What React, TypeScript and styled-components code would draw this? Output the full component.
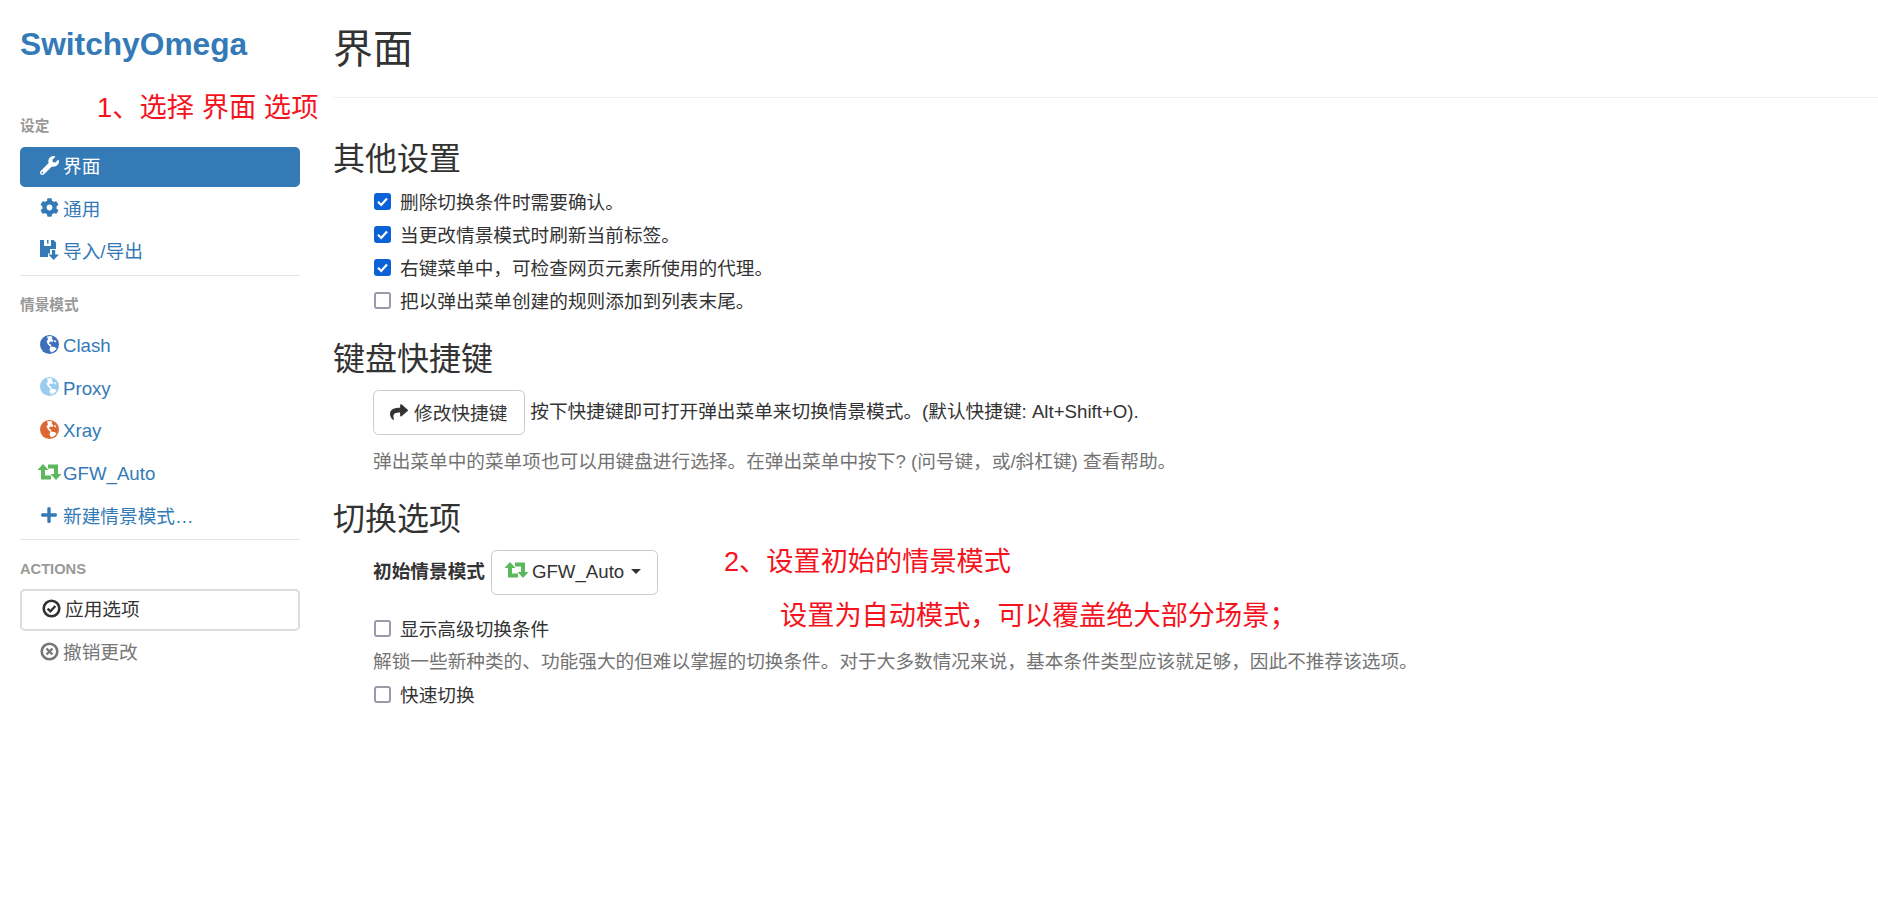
import styled, { createGlobalStyle } from 'styled-components'
import { FaCog, FaPlus, FaShare, FaWrench } from 'react-icons/fa'

const GlobalStyle = createGlobalStyle`
  html, body {
    margin: 0;
    background: #fff;
    color: #333;
    font-family: "Liberation Sans", "Noto Sans CJK SC", sans-serif;
    font-size: 18.67px;
  }
`

const Page = styled.div`
  position: relative;
  display: flex;
  width: 1878px;
  height: 924px;
  overflow: hidden;
`

const Sidebar = styled.aside`
  flex: none;
  width: 280px;
  margin: 0 33px 0 20px;
  padding-top: 22px;
`

const Logo = styled.div`
  height: 44px;
  font-size: 31.7px;
  font-weight: bold;
  line-height: 44px;
  color: #337ab7;
`

const NavHeader = styled.div<{ $top: number }>`
  margin-top: ${(p) => p.$top}px;
  height: 20px;
  margin-bottom: 11px;
  font-size: 14.67px;
  font-weight: bold;
  line-height: 20px;
  color: #999;
`

const NavList = styled.ul`
  list-style: none;
  margin: 0;
  padding: 0;
  display: flex;
  flex-direction: column;
  gap: 2.67px;
`

const NavItem = styled.li<{ $variant?: 'active' | 'action' | 'muted' }>`
  box-sizing: border-box;
  display: flex;
  align-items: center;
  height: ${(p) => (p.$variant === 'action' ? 42 : 40)}px;
  margin: ${(p) => (p.$variant === 'action' ? '-1px 0' : '0')};
  padding-left: 20px;
  border-radius: 5px;
  line-height: 26px;
  color: ${(p) =>
    p.$variant === 'active' ? '#fff' : p.$variant === 'action' ? '#333' : p.$variant === 'muted' ? '#777' : '#337ab7'};
  background: ${(p) => (p.$variant === 'active' ? '#337ab7' : 'transparent')};
  border: ${(p) => (p.$variant === 'action' ? '2px solid #dcdcdc' : 'none')};
`

const NavIcon = styled.span<{ $color?: string }>`
  flex: none;
  width: 23px;
  margin-bottom: 4px;
  display: flex;
  align-items: center;
  color: ${(p) => p.$color || 'inherit'};
  svg {
    display: block;
  }
`

const WideIcon = styled(NavIcon)`
  margin-left: -3px;
  width: 26px;
`

const Divider = styled.div`
  height: 1.33px;
  margin: 2.4px 0 0;
  background: #e5e5e5;
`

const Main = styled.main`
  flex: 1;
  min-width: 0;
`

const PageTitle = styled.h1`
  margin: 0;
  padding-top: 24px;
  height: 98px;
  box-sizing: border-box;
  border-bottom: 1.33px solid #eee;
  font-size: 40px;
  font-weight: 400;
  line-height: 50px;
  color: #333;
`

const SectionTitle = styled.h2<{ $top: number }>`
  margin: ${(p) => p.$top}px 0 0;
  font-size: 32px;
  font-weight: 400;
  line-height: 40px;
  color: #333;
`

const Section = styled.section`
  padding-left: 40px;
`

const CheckRow = styled.label<{ $top?: number }>`
  display: flex;
  align-items: center;
  height: 33px;
  margin-top: ${(p) => p.$top ?? 0}px;
`

const CheckBox = styled.span<{ $checked?: boolean }>`
  box-sizing: border-box;
  flex: none;
  width: 17px;
  height: 17px;
  margin: 2px 9px 0 1px;
  border-radius: 3px;
  display: flex;
  align-items: center;
  justify-content: center;
  background: ${(p) => (p.$checked ? '#0b62d6' : '#fff')};
  border: ${(p) => (p.$checked ? 'none' : '2px solid #9a9aa8')};
`

const ShortcutRow = styled.div`
  display: flex;
  align-items: center;
  margin-top: 11px;
  gap: 5px;
`

const ShortcutText = styled.span`
  margin-bottom: 6px;
`

const Button = styled.button`
  box-sizing: border-box;
  display: inline-flex;
  align-items: center;
  height: 45px;
  padding: 0 16px 2px;
  background: #fff;
  border: 1.33px solid #ccc;
  border-radius: 5.5px;
  color: #333;
  font: inherit;
`

const ShareIcon = styled.span`
  display: flex;
  margin-right: 6px;
`

const ShortcutLabel = styled.span`
  margin-right: 1px;
`

const Help = styled.p<{ $top?: number }>`
  margin: ${(p) => p.$top ?? 0}px 0 0;
  height: 26px;
  line-height: 26px;
  color: #737373;
`

const ProfileRow = styled.div`
  display: flex;
  align-items: center;
  margin-top: 11px;
  gap: 6px;
`

const FieldLabel = styled.span`
  margin-bottom: 7px;
  font-weight: bold;
`

const Caret = styled.span`
  width: 0;
  height: 0;
  margin-left: 7px;
  border-top: 5.33px solid #333;
  border-left: 5.33px solid transparent;
  border-right: 5.33px solid transparent;
`

const GreenIcon = styled.span`
  display: flex;
  width: 28px;
  margin: 0 0 4px -4px;
  color: #5cb85c;
`

const Annotation = styled.div<{ $x: number; $y: number; $size: number }>`
  position: absolute;
  left: ${(p) => p.$x}px;
  top: ${(p) => p.$y}px;
  font-size: ${(p) => p.$size}px;
  line-height: 40px;
  color: #f5141e;
  white-space: pre;
`

const Check = () => (
  <svg width="13" height="13" viewBox="0 0 13 13">
    <path d="M2 6.8 L5.2 10 L11 3.4" fill="none" stroke="#fff" strokeWidth="2.2" />
  </svg>
)

const FloppySave = () => (
  <svg width="19" height="20" viewBox="0 0 19 20" fill="currentColor">
    <path d="M0 0h13.5L16 2.5V9h-6v4.5H8V17H0zM4 0v6h7V0H8.5v3.5H7V0z" fillRule="evenodd" />
    <path d="M12 10h3.2v4.5H19L13.6 20 8.5 14.5H12z" />
  </svg>
)

const OkCircle = () => (
  <svg width="19" height="19" viewBox="0 0 19 19">
    <circle cx="9.5" cy="9.5" r="7.8" fill="none" stroke="currentColor" strokeWidth="2.6" />
    <path d="M5.6 9.6 L8.4 12.3 L13.4 7" fill="none" stroke="currentColor" strokeWidth="2.4" />
  </svg>
)

const RemoveCircle = () => (
  <svg width="19" height="19" viewBox="0 0 19 19">
    <circle cx="9.5" cy="9.5" r="7.8" fill="none" stroke="currentColor" strokeWidth="2.6" />
    <path d="M6.5 6.5 L12.5 12.5 M12.5 6.5 L6.5 12.5" fill="none" stroke="currentColor" strokeWidth="2.4" />
  </svg>
)

const Globe = () => (
  <svg width="19" height="19" viewBox="0 0 19 19">
    <circle cx="9.5" cy="9.5" r="9.5" fill="currentColor" />
    <path d="M7 1.5 11 1l1.5 1.5-1 1.5 2 1-1 2-2.5-.5L9 8.5l2.5 1.5-1 2L8 9.5 6.5 6.5 8 4.5z" fill="#fff" />
    <path d="M10.5 11.5l4 .5 2.2 1.5-2.2 2.5-3.5 1.5-1.5-3z" fill="#fff" />
    <path d="M14.5 5l1.8 1-.8 1.5-1.5-1z" fill="#fff" />
  </svg>
)

const Retweet = () => (
  <svg width="25" height="16" viewBox="0 0 25 16" fill="currentColor">
    <path d="M6 0L11.5 6H8V11.5H14V15.5H4V6H.5z" />
    <path d="M19 16L13.5 10H17V4.5H11V.5H21V10H24.5z" />
  </svg>
)

const profiles = [
  { name: 'Clash', color: '#3e6fbd' },
  { name: 'Proxy', color: '#99ccee' },
  { name: 'Xray', color: '#dd6633' },
]

const options = [
  { text: '删除切换条件时需要确认。', checked: true },
  { text: '当更改情景模式时刷新当前标签。', checked: true },
  { text: '右键菜单中，可检查网页元素所使用的代理。', checked: true },
  { text: '把以弹出菜单创建的规则添加到列表末尾。', checked: false },
]

function App() {
  return (
    <Page>
      <GlobalStyle />
      <Sidebar>
        <Logo>SwitchyOmega</Logo>
        <NavHeader $top={50}>设定</NavHeader>
        <NavList>
          <NavItem $variant="active">
            <NavIcon><FaWrench size={19} /></NavIcon>界面
          </NavItem>
          <NavItem>
            <NavIcon><FaCog size={19} /></NavIcon>通用
          </NavItem>
          <NavItem>
            <NavIcon><FloppySave /></NavIcon>导入/导出
          </NavItem>
        </NavList>
        <Divider />
        <NavHeader $top={19}>情景模式</NavHeader>
        <NavList>
          {profiles.map((profile) => (
            <NavItem key={profile.name}>
              <NavIcon $color={profile.color}><Globe /></NavIcon>
              {profile.name}
            </NavItem>
          ))}
          <NavItem>
            <WideIcon $color="#5cb85c"><Retweet /></WideIcon>GFW_Auto
          </NavItem>
          <NavItem>
            <NavIcon><FaPlus size={18} /></NavIcon>新建情景模式…
          </NavItem>
        </NavList>
        <Divider />
        <NavHeader $top={19}>ACTIONS</NavHeader>
        <NavList>
          <NavItem $variant="action">
            <NavIcon><OkCircle /></NavIcon>应用选项
          </NavItem>
          <NavItem $variant="muted">
            <NavIcon><RemoveCircle /></NavIcon>撤销更改
          </NavItem>
        </NavList>
      </Sidebar>
      <Main>
        <PageTitle>界面</PageTitle>
        <SectionTitle $top={41}>其他设置</SectionTitle>
        <Section>
          <div>
            {options.map((option, index) => (
              <CheckRow key={option.text} $top={index === 0 ? 5 : 0}>
                <CheckBox $checked={option.checked}>{option.checked && <Check />}</CheckBox>
                {option.text}
              </CheckRow>
            ))}
          </div>
        </Section>
        <SectionTitle $top={23}>键盘快捷键</SectionTitle>
        <Section>
          <ShortcutRow>
            <Button>
              <ShareIcon><FaShare size={18} /></ShareIcon>
              <ShortcutLabel>修改快捷键</ShortcutLabel>
            </Button>
            <ShortcutText>按下快捷键即可打开弹出菜单来切换情景模式。(默认快捷键: Alt+Shift+O).</ShortcutText>
          </ShortcutRow>
          <Help $top={14}>弹出菜单中的菜单项也可以用键盘进行选择。在弹出菜单中按下? (问号键，或/斜杠键) 查看帮助。</Help>
        </Section>
        <SectionTitle $top={24}>切换选项</SectionTitle>
        <Section>
          <ProfileRow>
            <FieldLabel>初始情景模式</FieldLabel>
            <Button>
              <GreenIcon><Retweet /></GreenIcon>GFW_Auto<Caret />
            </Button>
          </ProfileRow>
          <CheckRow $top={16}>
            <CheckBox />显示高级切换条件
          </CheckRow>
          <Help $top={5}>解锁一些新种类的、功能强大的但难以掌握的切换条件。对于大多数情况来说，基本条件类型应该就足够，因此不推荐该选项。</Help>
          <CheckRow $top={2}>
            <CheckBox />快速切换
          </CheckRow>
        </Section>
      </Main>
      <Annotation $x={97} $y={88} $size={27.3}>1、选择 界面 选项</Annotation>
      <Annotation $x={724} $y={542} $size={27.2}>2、设置初始的情景模式</Annotation>
      <Annotation $x={780} $y={596} $size={27.2}>设置为自动模式，可以覆盖绝大部分场景；</Annotation>
    </Page>
  )
}

export default App
